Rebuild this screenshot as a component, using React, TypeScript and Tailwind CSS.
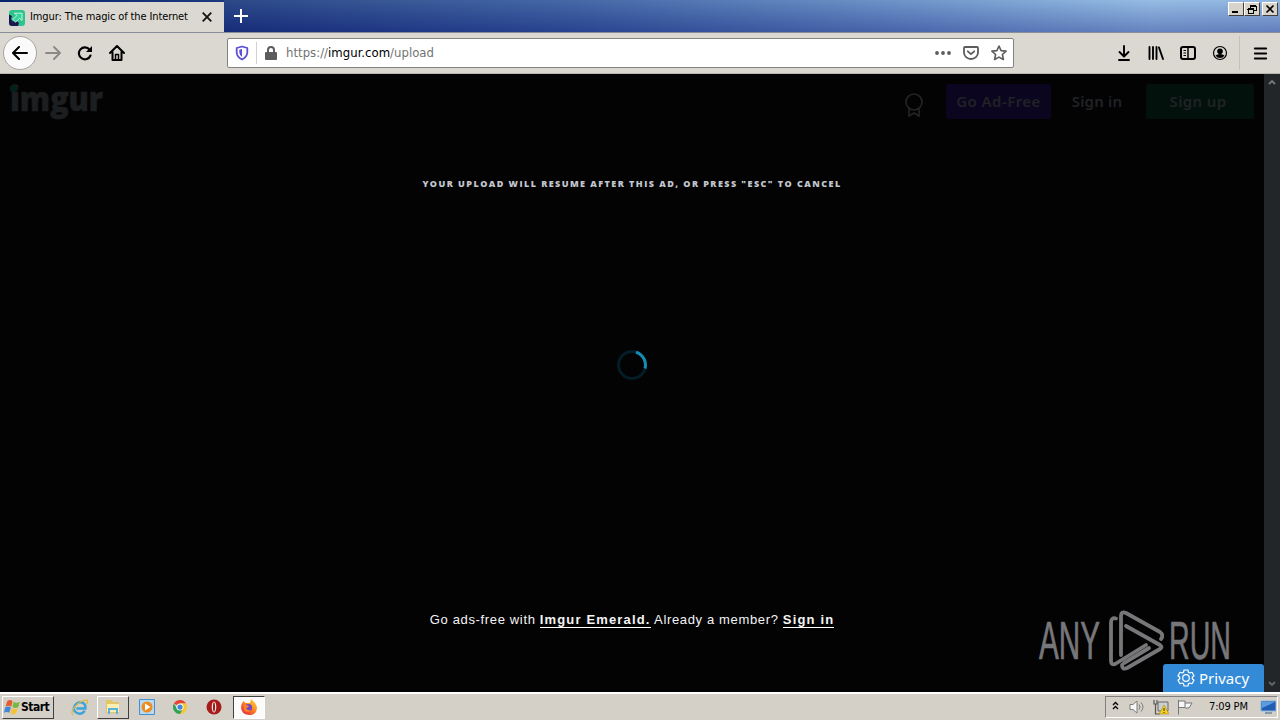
import { useId } from 'react'
import type { ReactNode } from 'react'
import { Menu } from 'lucide-react'

// Classic Windows bevel button in the title bar
function WindowButton({ label, className, children }: { label: string; className?: string; children: ReactNode }) {
  return (
    <button
      aria-label={label}
      className={`h-[14px] w-4 border border-t-white border-l-white border-r-[#404040] border-b-[#404040] bg-[#d8d4cc] ${className ?? ''}`}
    >
      <svg viewBox="0 0 14 12" className="h-3 w-[14px]" fill="none" stroke="#000" shapeRendering="crispEdges">
        {children}
      </svg>
    </button>
  )
}

function TitleBar() {
  return (
    <header className="flex h-8 bg-[linear-gradient(90deg,#0a246a_0%,#1d3d80_20%,#365c9f_45%,#628bc4_70%,#8db7e2_90%,#88b1de_100%)]">
      <div className="mt-[2px] flex h-[31px] w-[224px] items-center bg-[#dbd8d1] pl-[9px]">
        <svg viewBox="0 0 16 16" className="h-4 w-4">
          <rect width="16" height="16" rx="3" fill="#2fc48c" />
          <path d="M0 4.500L3 6 2 9l2 2.500L7 10l3 3-1 3H3q-3 0-3-3Z" fill="#1b1850" />
          <path d="M5.500 3.200H13v7.300l-2.400-2.300-4 4-2.700-2.700 4-4Z" fill="#35d39b" stroke="#d3f8e8" strokeWidth=".9" />
        </svg>
        <span className="ml-[5px] w-[166px] whitespace-nowrap font-['DejaVu_Sans_Condensed','DejaVu_Sans',sans-serif] text-[11px] tracking-[-0.120px] text-black">
          Imgur: The magic of the Internet
        </span>
        <svg viewBox="0 0 10 10" className="mb-[2px] ml-[6px] h-[10px] w-[10px]" stroke="#111" strokeWidth="1.800">
          <path d="M.7.7l8.600 8.600M9.300.7L.7 9.300" />
        </svg>
      </div>
      <div className="flex flex-1 bg-[linear-gradient(180deg,rgba(255,255,255,0.08),rgba(10,10,110,0.3))]">
        <svg viewBox="0 0 14 14" className="mt-[9px] ml-[10px] h-[14px] w-[14px]" stroke="#fff" strokeWidth="2">
          <path d="M7 0v14M0 7h14" />
        </svg>
        <div className="mt-[2px] mr-[2px] ml-auto flex">
          <WindowButton label="Minimize">
            <path d="M3 9h6" strokeWidth="2" />
          </WindowButton>
          <WindowButton label="Restore">
            <path d="M5 2h6M5 3.500h6v4h-2M5.500 3v2M3 5h6M3 6.500h5.500v4h-5z" />
          </WindowButton>
          <WindowButton label="Close" className="ml-[2px]">
            <path d="M3.500 2.500l7 7M10.500 2.500l-7 7" strokeWidth="1.700" shapeRendering="auto" />
          </WindowButton>
        </div>
      </div>
    </header>
  )
}

function UrlBar() {
  return (
    <div className="ml-[102px] flex h-[30px] w-[787px] shrink-0 items-center rounded-[2px] border border-[#85837f] bg-white pl-[7px]">
      <svg viewBox="0 0 14 16" className="h-4 w-[14px]" fill="none">
        <path d="M7 1.500L12.300 3v4.500Q12 12 7 14.500 2 12 1.700 7.500V3Z" stroke="#5a4fd6" strokeWidth="1.800" strokeLinejoin="round" />
        <path d="M7 4v8Q4.500 10 4.300 7.300V4.800Z" fill="#5a4fd6" />
      </svg>
      <span className="ml-[7px] h-[22px] w-px bg-[#d4d1cb]" />
      <svg viewBox="0 0 12 14" className="ml-2 h-[14px] w-3">
        <path d="M3 6.500V4a3 3 0 0 1 6 0v2.500" fill="none" stroke="#5c5c5c" strokeWidth="2" />
        <rect y="6" width="12" height="8" rx="1" fill="#5c5c5c" />
      </svg>
      <span className="ml-[9px] whitespace-nowrap font-['DejaVu_Sans_Condensed','DejaVu_Sans',sans-serif] text-[13px] tracking-[0.020px] text-[#737373]">
        https://<span className="text-black">imgur.com</span>/upload
      </span>
      <div className="mr-[6px] ml-auto flex items-center">
        <svg viewBox="0 0 16 4" className="h-1 w-4" fill="#5c5c5c">
          <circle cx="2" cy="2" r="1.900" />
          <circle cx="8" cy="2" r="1.900" />
          <circle cx="14" cy="2" r="1.900" />
        </svg>
        <svg viewBox="0 0 16 14" className="ml-3 h-[14px] w-4" fill="none" stroke="#5c5c5c" strokeWidth="1.800" strokeLinecap="round" strokeLinejoin="round">
          <path d="M2 1h12q1 0 1 1v4.500a7 6.500 0 0 1-14 0V2q0-1 1-1Z" />
          <path d="M4.800 5.300L8 8.200l3.200-2.900" />
        </svg>
        <svg viewBox="0 0 16 16" className="ml-3 h-4 w-4" fill="none" stroke="#5c5c5c" strokeWidth="1.600" strokeLinejoin="round">
          <path d="M8 1l2.100 4.600 5 .5-3.700 3.400 1 5L8 12.100l-4.400 2.400 1-5L.9 6.100l5-.5Z" />
        </svg>
      </div>
    </div>
  )
}

function Toolbar() {
  return (
    <nav className="flex h-[42px] items-center border-t border-b border-t-[#888d98] border-b-[#b8b5af] bg-[#dbd8d1] pl-[3px]">
      <button aria-label="Back" className="flex h-[34px] w-[34px] items-center justify-center rounded-full border border-[#a8a5a0] bg-[#fafafa]">
        <svg viewBox="0 0 16 14" className="h-[14px] w-4" fill="none" stroke="#000" strokeWidth="2" strokeLinecap="round" strokeLinejoin="round">
          <path d="M15 7H1.500M7 1L1 7l6 6" />
        </svg>
      </button>
      <svg viewBox="0 0 16 14" className="ml-2 h-[14px] w-4" fill="none" stroke="#8b8985" strokeWidth="1.900" strokeLinecap="round" strokeLinejoin="round">
        <path d="M1 7h13.500M9 1l6 6-6 6" />
      </svg>
      <svg viewBox="0 0 16 16" className="ml-4 h-4 w-4" fill="none" stroke="#000" strokeWidth="2.100" strokeLinecap="round">
        <path d="M12.600 4.600A6 6 0 1 0 13.500 10.500" />
        <path d="M15 1v6H9z" fill="#000" stroke="none" />
      </svg>
      <svg viewBox="0 0 16 16" className="ml-4 h-4 w-4" fill="none" stroke="#000" strokeWidth="2" strokeLinecap="round" strokeLinejoin="round">
        <path d="M1 8l7-7 7 7M3.500 7v8h9V7" />
        <path d="M6.500 14.500V9.500h3v5" strokeWidth="1.500" />
      </svg>
      <UrlBar />
      <svg viewBox="0 0 12 16" className="ml-[104px] h-4 w-3" fill="none" stroke="#000" strokeWidth="1.900" strokeLinecap="round" strokeLinejoin="round">
        <path d="M6 1v10M1.500 7L6 11.500 10.500 7M1 15h10" />
      </svg>
      <svg viewBox="0 0 16 14" className="ml-[18px] h-[14px] w-4" fill="none" stroke="#000" strokeWidth="1.900" strokeLinecap="round">
        <path d="M1.500 1v12M5 1v12M8.500 1v12M11 1.500l4 11.500" />
      </svg>
      <svg viewBox="0 0 16 14" className="ml-4 h-[14px] w-4" fill="none" stroke="#000" strokeWidth="2">
        <rect x="1" y="1" width="14" height="12" rx="2" />
        <path d="M8 1v12" strokeWidth="1.500" />
        <path d="M3.500 4.500h2.500M3.500 7H6M3.500 9.500H6" strokeWidth="1" />
      </svg>
      <svg viewBox="0 0 16 16" className="ml-4 h-4 w-4">
        <circle cx="8" cy="8" r="6.500" fill="none" stroke="#000" strokeWidth="1.200" />
        <circle cx="8" cy="6.300" r="2.800" />
        <path d="M3.500 10.500Q5 9 8 9t4.500 1.500Q11 13 8 13t-4.500-2.500Z" />
      </svg>
      <span className="ml-[11px] h-[34px] w-px bg-[#c5c2bc]" />
      <Menu className="ml-3 h-[17px] w-[17px] text-black" strokeWidth={2.700} />
    </nav>
  )
}

function SiteHeader() {
  return (
    <div className="flex h-[45px] items-start pt-[10px] font-['Noto_Sans',sans-serif] text-[15px] font-semibold text-[#202225]">
      <svg viewBox="0 0 96 36" className="ml-[9px] h-9 w-24 overflow-visible">
        <text x="1" y="27" textLength="93" lengthAdjust="spacingAndGlyphs" fill="#1d1e1f" stroke="#1d1e1f" strokeWidth=".6" fontFamily="'Open Sans',sans-serif" fontWeight="800" fontSize="33">
          imgur
        </text>
        <circle cx="4.500" cy="4.500" r="3.800" fill="#03201a" />
      </svg>
      <svg viewBox="0 0 20 26" className="mt-[8px] ml-[799px] h-[26px] w-5" fill="none" stroke="#222426" strokeWidth="1.700">
        <circle cx="10" cy="10" r="8" />
        <path d="M5 16v8l5-3 5 3v-8" />
      </svg>
      <button className="ml-[22px] h-[35px] w-[105px] rounded-[3px] bg-[#0b051f] whitespace-nowrap tracking-[0.450px]">Go Ad-Free</button>
      <button className="ml-5 h-[35px] w-[52px] whitespace-nowrap tracking-[0.200px]">Sign in</button>
      <button className="ml-[23px] h-[35px] w-[108px] rounded-[3px] bg-[#02110b] pr-1 tracking-[0.350px]">Sign up</button>
    </div>
  )
}

function AnyRunLogo() {
  return (
    <svg viewBox="0 0 194 64" className="h-16 w-[194px] overflow-visible" fill="none" stroke="#77777a" strokeWidth="3.800" strokeLinejoin="round" strokeLinecap="round">
      <g fill="#77777a" strokeWidth=".7" fontFamily="'Liberation Sans Narrow','Liberation Sans',sans-serif" fontSize="53">
        <text x="1" y="50" textLength="61" lengthAdjust="spacingAndGlyphs">ANY</text>
        <text x="131" y="50" textLength="62" lengthAdjust="spacingAndGlyphs">RUN</text>
      </g>
      <path d="M78 9.500Q73 8 73 14V52q0 5 5 2.500L108 36" />
      <path d="M83 46V7q0-5 5-3l34 19q4 3 1 7M88 17l34 19q3 2 0 4L89 59q-5 2-5-3M86 54l25-15" />
    </svg>
  )
}

function AdOverlay() {
  return (
    <main className="flex h-[618px] bg-[#030304]">
      <div className="relative w-[1264px]">
        <SiteHeader />
        <div className="flex flex-col items-center">
          <p className="mt-[57px] h-4 whitespace-nowrap font-['Open_Sans',sans-serif] text-[9px] leading-4 font-extrabold tracking-[1.450px] text-[#c4c6ce]">
            YOUR UPLOAD WILL RESUME AFTER THIS AD, OR PRESS "ESC" TO CANCEL
          </p>
          <svg viewBox="0 0 32 32" className="mt-[157px] h-8 w-8" fill="none" strokeWidth="3">
            <circle cx="16" cy="16" r="13.500" stroke="#041d28" />
            <path d="M20 3.100A13.500 13.500 0 0 1 29 19.500" stroke="#138db3" />
          </svg>
          <p className="mt-[229px] whitespace-nowrap font-['Liberation_Sans',sans-serif] text-[13px] leading-5 tracking-[0.650px] text-[#f4f4f4]">
            Go ads-free with <a className="border-b border-white font-bold tracking-[1.150px]">Imgur Emerald.</a> Already a member?{' '}
            <a className="border-b border-white font-bold tracking-[1.150px]">Sign in</a>
          </p>
        </div>
        <div className="absolute top-[535px] left-[1038px]">
          <AnyRunLogo />
        </div>
        <button className="absolute right-0 bottom-0 flex h-7 w-[101px] items-center rounded-t-[3px] bg-[#338bd8] pl-[14px] font-['Noto_Sans',sans-serif] text-[15px] text-white">
          <svg viewBox="0 0 18 18" className="h-[18px] w-[18px]" fill="none" stroke="#fff" strokeWidth="1.200" strokeLinejoin="round">
            <path d="M7 1h4l.5 2.300 1.200.7 2.300-.7 2 3.400L15.300 8.300v1.400l1.700 1.600-2 3.400-2.300-.7-1.200.7L11 17H7l-.5-2.300-1.200-.7-2.300.7-2-3.400 1.700-1.600V8.300L1 6.700l2-3.400 2.300.7 1.200-.7Z" />
            <circle cx="9" cy="9" r="3.300" />
          </svg>
          <span className="ml-1">Privacy</span>
        </button>
      </div>
      <div className="flex w-4 flex-col items-center justify-between bg-[#222629] py-[5px]">
        <svg viewBox="0 0 8 6" className="h-[6px] w-2" fill="none" stroke="#777b7e" strokeWidth="1.800">
          <path d="M1 5l3-3 3 3" />
        </svg>
        <svg viewBox="0 0 8 6" className="h-[6px] w-2" fill="none" stroke="#62676a" strokeWidth="1.800">
          <path d="M1 1l3 3 3-3" />
        </svg>
      </div>
    </main>
  )
}

function ExplorerIcon() {
  return (
    <svg viewBox="0 0 16 16" className="h-[17px] w-[17px] overflow-visible">
      <path d="M13 11Q9.500 15.500 5.300 13T3.700 6q3.500-4.500 7.800-2.300 2.500 1.500 2 5.300H5" fill="none" stroke="#3da3dc" strokeWidth="2.300" />
      <path d="M2 15Q-1 13 4 7T15 1q1.500 1-.5 4" fill="none" stroke="#dfba4a" strokeWidth="1.200" />
    </svg>
  )
}

function FirefoxIcon() {
  const id = useId()
  return (
    <svg viewBox="0 0 16 16" className="h-4 w-4">
      <defs>
        <linearGradient id={id} x1="1" y1="0" x2="0.200" y2="1">
          <stop offset="0" stopColor="#ffe14a" />
          <stop offset=".45" stopColor="#ff9420" />
          <stop offset="1" stopColor="#e8273e" />
        </linearGradient>
      </defs>
      <path d="M2.500 2l2 2L9 4l1-4q5 4 6 8 0 8-8 8Q0 15 0 8q0-3 2.500-6Z" fill={`url(#${id})`} />
      <circle cx="7.500" cy="8.500" r="3.600" fill="#7147c9" />
      <path d="M3 6q3 0 5 1-1 2-3 2 1 3 5 2-4 4-7 0Z" fill="#ff8428" />
    </svg>
  )
}

function Taskbar() {
  return (
    <footer className="flex h-7 items-center border-t-2 border-white bg-[#d4d0c8] pl-[2px]">
      <button className="flex h-[23px] w-[52px] items-center border border-t-white border-l-white border-r-[#404040] border-b-[#404040] pl-px">
        <svg viewBox="0 0 16 16" className="h-[17px] w-[17px] shrink-0">
          <path d="M3 2q3-2 5 0L7 7Q4 5.500 1.500 7Z" fill="#e65c2c" />
          <path d="M9 2.500q3 2 6 0l-1.500 5q-3 2-5.500 0Z" fill="#79b743" />
          <path d="M1 8q3-2 5.500 0L5 13Q2.500 11.500 0 13Z" fill="#4387d5" />
          <path d="M7.500 8.500q3 2 5.500 0l-1.500 5q-3 2-5.500 0Z" fill="#f4c33b" />
        </svg>
        <span className="font-['DejaVu_Sans_Condensed','DejaVu_Sans',sans-serif] text-[12px] font-bold tracking-[-0.500px] text-black">Start</span>
      </button>
      <div className="ml-[17px]">
        <ExplorerIcon />
      </div>
      <div className="ml-[9px] flex h-[23px] w-8 items-center justify-center border border-t-white border-l-white border-r-[#404040] border-b-[#404040]">
        <svg viewBox="0 0 16 16" className="h-4 w-4">
          <path d="M1 1h6l1 2h6v11H1Z" fill="#e3c566" />
          <path d="M2 5h12v8H2Z" fill="#fbeeb0" />
          <path d="M3 15v-6h10v6h-2v-4H5v4Z" fill="#58b2dc" />
        </svg>
      </div>
      <svg viewBox="0 0 16 16" className="ml-[10px] h-4 w-4">
        <path d="M.5.5h15v15H.5Z" fill="#b7d9f2" stroke="#438fd0" />
        <circle cx="8" cy="8" r="5.500" fill="#ef8b1c" />
        <path d="M6 4.500l5.500 3.500L6 11.500Z" fill="#fff" />
      </svg>
      <svg viewBox="0 0 16 16" className="ml-[18px] h-[14px] w-[14px]">
        <path d="M8 8L1.070 4A8 8 0 0 1 14.930 4L8 4Z" fill="#e54335" />
        <path d="M14.930 4A8 8 0 0 1 8 16l3.500-6L8 4Z" fill="#fbc72c" />
        <path d="M1.070 4A8 8 0 0 0 8 16l3.500-6H4.500Z" fill="#31a354" />
        <circle cx="8" cy="8" r="4" fill="#fff" />
        <circle cx="8" cy="8" r="3" fill="#4285d9" />
      </svg>
      <svg viewBox="0 0 16 16" className="ml-[19px] h-4 w-4">
        <circle cx="8" cy="8" r="7.500" fill="#a81919" />
        <ellipse cx="8" cy="8" rx="2.300" ry="5.500" fill="#f2e9e5" />
        <ellipse cx="8" cy="8" rx="1" ry="4.700" fill="#9b1b18" />
      </svg>
      <div className="ml-[11px] flex h-[23px] w-8 items-center justify-center border border-t-[#404040] border-l-[#404040] border-r-white border-b-white bg-[#fbfbfb]">
        <FirefoxIcon />
      </div>
      <div className="mr-[2px] ml-auto flex h-[22px] w-[173px] items-center border border-t-[#808080] border-l-[#808080] border-r-white border-b-white pl-[6px]">
        <svg viewBox="0 0 7 9" className="mb-[3px] h-[9px] w-[7px]" fill="none" stroke="#000" strokeWidth="1.300">
          <path d="M1 4l2.500-2.500L6 4M1 8l2.500-2.500L6 8" />
        </svg>
        <svg viewBox="0 0 16 16" className="ml-[10px] h-4 w-4" fill="#f8f8f8" stroke="#7c7c7c">
          <path d="M1 5.500h3L8 2v12l-4-3.500H1Z" />
          <path d="M10 5.500q2 2.500 0 5M12 3.500q4 4.500 0 9" fill="none" />
        </svg>
        <svg viewBox="0 0 16 16" className="ml-2 h-4 w-4">
          <path d="M5 3h10v9H5Z" fill="#c9ced1" stroke="#666" />
          <path d="M1 1v4h3V1M2.500 5v10H7" fill="none" stroke="#555" strokeWidth="1.200" />
          <path d="M11 6l5 9H6Z" fill="#f4ce22" stroke="#b38c0b" strokeWidth=".6" />
          <path d="M11 9v3M11 13v1" stroke="#333" />
        </svg>
        <svg viewBox="0 0 16 16" className="ml-2 h-4 w-4" fill="#f7f7f7" stroke="#777">
          <path d="M1.500 15.500V1M2 2h6v6.500H2M8 4h7l-3 5H8" />
        </svg>
        <span className="ml-4 w-11 whitespace-nowrap font-['DejaVu_Sans_Condensed','DejaVu_Sans',sans-serif] text-[11px] tracking-[-0.150px] text-black">7:09 PM</span>
        <svg viewBox="0 0 16 14" className="ml-[7px] h-[14px] w-4">
          <path d="M1 1h15v10H1Z" fill="#215db2" stroke="#88b5dd" />
          <path d="M2 2h13L2 8Z" fill="#5c9be0" />
          <path d="M5 12h7v2H5Z" fill="#8298ad" />
        </svg>
      </div>
    </footer>
  )
}

export default function App() {
  return (
    <div className="flex h-[720px] w-[1280px] flex-col overflow-hidden bg-[#d4d0c8]">
      <TitleBar />
      <Toolbar />
      <AdOverlay />
      <Taskbar />
    </div>
  )
}
